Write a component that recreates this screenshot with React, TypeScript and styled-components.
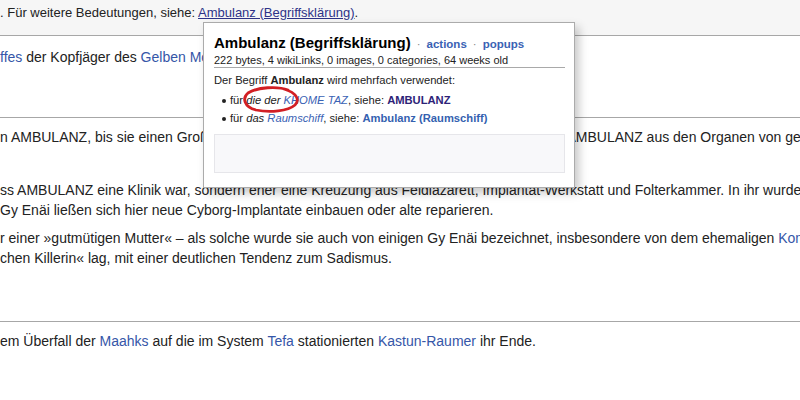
import React, { FC } from 'react'
import styled, { createGlobalStyle } from 'styled-components'

const GlobalStyle = createGlobalStyle`
	html, body {
		margin: 0;
		padding: 0;
		background: #fff;
	}
	body {
		font-family: 'Liberation Sans', Arial, sans-serif;
	}
`

const Page = styled.div`
	position: relative;
	width: 800px;
	height: 400px;
	overflow: hidden;
	font-size: 14px;
	line-height: 20px;
	color: #222;
	white-space: nowrap;
`

const Hatnote = styled.div`
	height: 32px;
	padding-top: 3px;
	font-size: 13px;
	background: #f6f6f6;
	border-bottom: 1px solid #a7a7a7;
`

const Section = styled.div<{ padTop: number; height: number }>`
	box-sizing: border-box;
	height: ${(p) => p.height}px;
	padding-top: ${(p) => p.padTop}px;
	border-bottom: 1px solid #a7a7a7;
`

const LastSection = styled.div`
	padding-top: 9px;
`

const Para = styled.p<{ gap?: number }>`
	margin: ${(p) => p.gap || 0}px 0 0;
`

const WikiLink = styled.a`
	color: #3556a8;
	text-decoration: none;
`

const VisitedLink = styled.a`
	color: #2e3388;
	text-decoration: underline;
`

const Popup = styled.div`
	position: absolute;
	left: 203px;
	top: 22px;
	box-sizing: border-box;
	width: 372px;
	height: 166px;
	padding: 11px 9px 0 10px;
	background: #fff;
	border: 1px solid #ababab;
	box-shadow: 4px 5px 9px rgba(0, 0, 0, 0.22);
	white-space: nowrap;
`

const PopupTitle = styled.div`
	font-size: 15px;
	line-height: 18px;
	font-weight: bold;
	color: #000;
`

const TitleLinks = styled.span`
	font-size: 11.5px;
	font-weight: bold;
	a {
		color: #3a62b4;
		text-decoration: none;
	}
`

const Dot = styled.span`
	margin: 0 6px;
	font-weight: normal;
	color: #888;
`

const PopupMeta = styled.div`
	font-size: 11px;
	line-height: 14px;
	color: #222;
	border-bottom: 1px solid #a9a9a9;
`

const PopupIntro = styled.div`
	margin-top: 5px;
	font-size: 11.2px;
	line-height: 14px;
	color: #222;
`

const PopupList = styled.ul`
	list-style: none;
	margin: 4px 0 0;
	padding: 0 0 0 16px;
	font-size: 11.2px;
	line-height: 18px;
	color: #222;
`

const PopupItem = styled.li`
	position: relative;
	&::before {
		content: '';
		position: absolute;
		left: -8px;
		top: 8px;
		width: 4px;
		height: 4px;
		border-radius: 50%;
		background: #222;
	}
	i a {
		color: #3a62b4;
		text-decoration: none;
	}
`

const StrongLink = styled.a<{ visited?: boolean }>`
	font-weight: bold;
	color: ${(p) => (p.visited ? '#2d2378' : '#3461b0')};
	text-decoration: none;
`

const PreviewBox = styled.div`
	margin-top: 7px;
	height: 37px;
	background: #f8f8fa;
	border: 1px solid #e6e6ea;
`

const Scribble = styled.svg`
	position: absolute;
	left: 240px;
	top: 85px;
`

const RedCircle: FC = () => (
	<Scribble width="64" height="30" viewBox="0 0 64 30">
		<path
			d="M48 5 C38 1 17 2 8 8 C2 13 4 22 16 25 C30 28 48 26 55 20 C60 15 57 8 44 4"
			fill="none"
			stroke="#d21f24"
			strokeWidth="2.8"
			strokeLinecap="round"
		/>
	</Scribble>
)

const App: FC = () => {
	return (
		<>
			<GlobalStyle />
			<Page>
				<Hatnote>
					. Für weitere Bedeutungen, siehe:{' '}
					<VisitedLink href="#">Ambulanz (Begriffsklärung)</VisitedLink>.
				</Hatnote>
				<Section padTop={11} height={82}>
					<Para>
						<WikiLink href="#">ffes</WikiLink> der Kopfjäger des{' '}
						<WikiLink href="#">Gelben Mondes</WikiLink> gehörte.
					</Para>
				</Section>
				<Section padTop={9} height={204}>
					<Para>
						n AMBULANZ, bis sie einen Großteil ihrer Besatzung verlor und man
						schließlich die eigene AMBULANZ aus den Organen von getöteten
						Gegnern neu errichtete.
					</Para>
					<Para gap={33}>
						ss AMBULANZ eine Klinik war, sondern eher eine Kreuzung aus
						Feldlazarett, Implantat-Werkstatt und Folterkammer. In ihr wurden
						<br />
						Gy Enäi ließen sich hier neue Cyborg-Implantate einbauen oder alte
						reparieren.
					</Para>
					<Para gap={8}>
						r einer »gutmütigen Mutter« – als solche wurde sie auch von einigen
						Gy Enäi bezeichnet, insbesondere von dem ehemaligen{' '}
						<WikiLink href="#">Kommandanten</WikiLink>
						<br />
						chen Killerin« lag, mit einer deutlichen Tendenz zum Sadismus.
					</Para>
				</Section>
				<LastSection>
					<Para>
						em Überfall der <WikiLink href="#">Maahks</WikiLink> auf die im
						System <WikiLink href="#">Tefa</WikiLink> stationierten{' '}
						<WikiLink href="#">Kastun-Raumer</WikiLink> ihr Ende.
					</Para>
				</LastSection>
				<Popup>
					<PopupTitle>
						Ambulanz (Begriffsklärung)
						<TitleLinks>
							<Dot>·</Dot>
							<a href="#">actions</a>
							<Dot>·</Dot>
							<a href="#">popups</a>
						</TitleLinks>
					</PopupTitle>
					<PopupMeta>
						222 bytes, 4 wikiLinks, 0 images, 0 categories, 64 weeks old
					</PopupMeta>
					<PopupIntro>
						Der Begriff <b>Ambulanz</b> wird mehrfach verwendet:
					</PopupIntro>
					<PopupList>
						<PopupItem>
							für{' '}
							<i>
								die der <a href="#">KHOME TAZ</a>
							</i>
							, siehe: <StrongLink href="#" visited>AMBULANZ</StrongLink>
						</PopupItem>
						<PopupItem>
							für{' '}
							<i>
								das <a href="#">Raumschiff</a>
							</i>
							, siehe: <StrongLink href="#">Ambulanz (Raumschiff)</StrongLink>
						</PopupItem>
					</PopupList>
					<PreviewBox />
				</Popup>
				<RedCircle />
			</Page>
		</>
	)
}

export default App
